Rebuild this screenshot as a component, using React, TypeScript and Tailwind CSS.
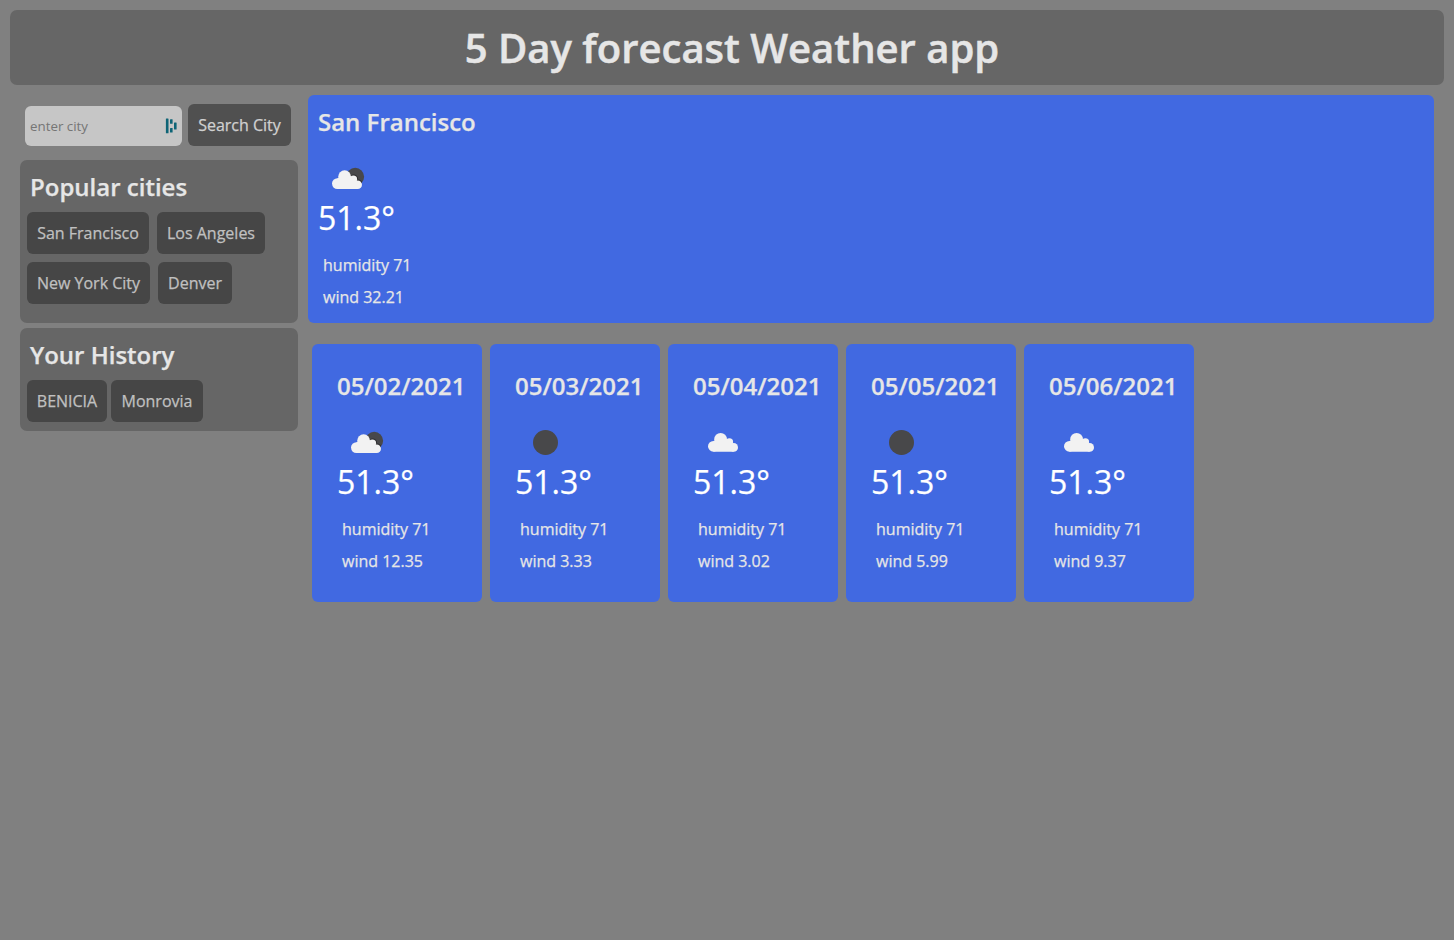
type Sky = "partly" | "clear" | "cloudy";

function Cloud() {
  return (
    <g fill="#f2f2f2">
      <circle cx="15.4" cy="29.3" r="5.4" />
      <circle cx="22.6" cy="22.4" r="6.4" />
      <circle cx="31.4" cy="24.9" r="3.7" />
      <circle cx="35.7" cy="30.4" r="4.3" />
      <path d="M15.4 34.7V24L22 22H28.5L34.5 26.5L35.7 27V34.7Z" />
    </g>
  );
}

function SkyIcon({ sky }: { sky: Sky }) {
  return (
    <svg viewBox="0 0 50 50" className="ml-[5px] mt-[15px] block size-[50px]">
      {sky === "clear" && <circle cx="25.5" cy="25.5" r="12.5" fill="#48484a" />}
      {sky === "cloudy" && <Cloud />}
      {sky === "partly" && (
        <>
          <clipPath id="moon">
            <circle cx="32.2" cy="23.7" r="8.9" />
          </clipPath>
          <circle cx="32.2" cy="23.7" r="8.9" fill="#48484a" />
          <g clipPath="url(#moon)" fill="#2c2c2e">
            <circle cx="30.8" cy="25.8" r="4.2" />
            <circle cx="35" cy="31.5" r="4.9" />
          </g>
          <g transform="translate(-1 1.3)">
            <Cloud />
          </g>
        </>
      )}
    </svg>
  );
}

type Report = { title: string; sky: Sky; wind: string };

function Weather({ title, sky, wind }: Report) {
  return (
    <>
      <h2 className="text-[24px] font-semibold leading-[32px] text-[#e6e6e6]">{title}</h2>
      <SkyIcon sky={sky} />
      <p className="text-[32px] leading-[30px] text-white">51.3°</p>
      <p className="mt-4 pl-[5px] leading-8 text-[#e6e6e6]">humidity 71</p>
      <p className="pl-[5px] leading-8 text-[#e6e6e6]">wind {wind}</p>
    </>
  );
}

const days: Report[] = [
  { title: "05/02/2021", sky: "partly", wind: "12.35" },
  { title: "05/03/2021", sky: "clear", wind: "3.33" },
  { title: "05/04/2021", sky: "cloudy", wind: "3.02" },
  { title: "05/05/2021", sky: "clear", wind: "5.99" },
  { title: "05/06/2021", sky: "cloudy", wind: "9.37" },
];

const cityButton = "h-[42px] rounded-md bg-[#464646] text-center whitespace-nowrap text-[#c0c0c0]";

export default function App() {
  return (
    <div className="min-h-screen bg-[#808080] p-[10px] font-['Open_Sans',sans-serif] text-[16px] [-webkit-text-stroke:0.25px]">
      <header className="flex h-[75px] items-center justify-center rounded-[7px] bg-[#666666] pl-[10px]">
        <h1 className="text-[40px] font-semibold leading-[54px] text-[#e6e6e6] [-webkit-text-stroke:0.5px]">
          5 Day forecast Weather app
        </h1>
      </header>

      <div className="flex gap-[10px] px-[10px]">
        <aside className="w-[278px] shrink-0">
          <form className="mt-[19px] flex items-end gap-[6px] pl-[5px]">
            <div className="flex h-10 w-[157px] items-center rounded-md bg-[#c6c6c6] px-[5px]">
              <input
                placeholder="enter city"
                className="w-full min-w-0 bg-transparent pt-[2px] text-[13.33px] outline-none placeholder:text-[#757575] [-webkit-text-stroke:0]"
              />
              <svg viewBox="0 0 12 16" className="h-4 w-3 shrink-0" fill="#0e6476">
                <rect x="0.9" y="0.6" width="2.6" height="14.6" rx="0.5" />
                <rect x="5" y="1.2" width="2.6" height="4.6" rx="0.5" />
                <rect x="5" y="10" width="2.6" height="4.6" rx="0.5" />
                <rect x="9" y="4.6" width="2.6" height="7" rx="0.5" />
              </svg>
            </div>
            <button type="button" className="h-[42px] w-[103px] rounded-md bg-[#505050] text-[#d0d0d0]">
              Search City
            </button>
          </form>

          <section className="mt-[14px] h-[163px] rounded-[7px] bg-[#666666] px-[7px] pt-[11px]">
            <h2 className="pl-[3px] text-[24px] font-semibold leading-[32px] text-[#e6e6e6]">Popular cities</h2>
            <div className="mt-[9px] flex flex-wrap gap-2">
              <button className={`${cityButton} w-[122px]`}>San Francisco</button>
              <button className={`${cityButton} w-[108px]`}>Los Angeles</button>
              <button className={`${cityButton} w-[123px]`}>New York City</button>
              <button className={`${cityButton} w-[74px]`}>Denver</button>
            </div>
          </section>

          <section className="mt-[5px] h-[103px] rounded-[7px] bg-[#666666] px-[7px] pt-[11px]">
            <h2 className="pl-[3px] text-[24px] font-semibold leading-[32px] text-[#e6e6e6]">Your History</h2>
            <div className="mt-[9px] flex gap-1">
              <button className={`${cityButton} w-[80px]`}>BENICIA</button>
              <button className={`${cityButton} w-[92px]`}>Monrovia</button>
            </div>
          </section>
        </aside>

        <main className="mt-[10px] flex-1">
          <section className="h-[228px] rounded-md bg-[#4169e1] px-[10px] pt-[11px]">
            <Weather title="San Francisco" sky="partly" wind="32.21" />
          </section>
          <div className="mt-[21px] flex gap-2 pl-1">
            {days.map((day) => (
              <article key={day.title} className="h-[258px] w-[170px] rounded-md bg-[#4169e1] pl-[25px] pt-[26px]">
                <Weather {...day} />
              </article>
            ))}
          </div>
        </main>
      </div>
    </div>
  );
}
